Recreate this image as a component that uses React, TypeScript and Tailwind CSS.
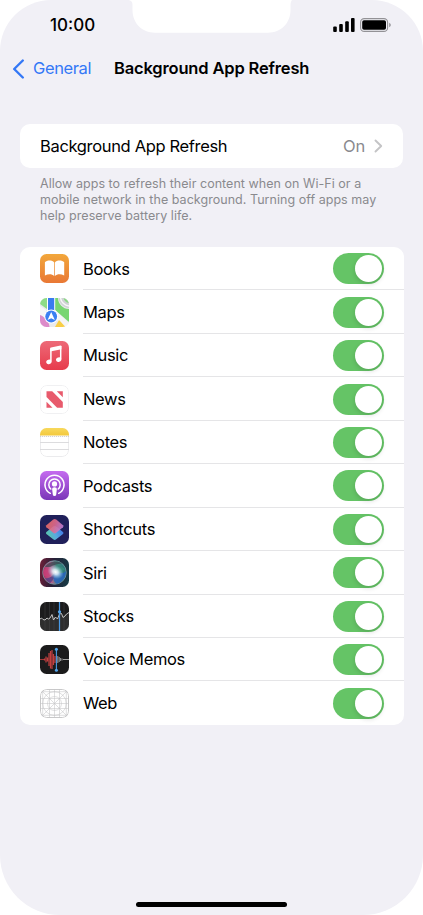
import type { ReactNode } from "react";

function Tile({ children, id }: { children: ReactNode; id: string }) {
    return (
        <svg viewBox="0 0 29 29" className="size-[29px] shrink-0">
            <defs>
                <clipPath id={id}>
                    <rect width="29" height="29" rx="6.5" />
                </clipPath>
            </defs>
            <g clipPath={`url(#${id})`}>{children}</g>
        </svg>
    );
}

function Gradient({ id, from, to }: { id: string; from: string; to: string }) {
    return (
        <linearGradient id={id} x1="0" y1="0" x2="0" y2="1">
            <stop stopColor={from} />
            <stop offset="1" stopColor={to} />
        </linearGradient>
    );
}

function BooksIcon() {
    return (
        <Tile id="books">
            <Gradient id="books-bg" from="#f2a73b" to="#e97835" />
            <rect width="29" height="29" fill="url(#books-bg)" />
            <path d="M14.200 8.600C13.100 7.200 11.500 6.600 9.600 6.600C7.700 6.600 6 7.200 4.900 8.300V21.600C6.400 20.700 8 20.300 9.600 20.300C11.400 20.300 13 20.800 14.200 21.900Z" fill="#fff" />
            <path d="M14.900 8.600C16 7.200 17.600 6.600 19.500 6.600C21.400 6.600 23.100 7.200 24.200 8.300V21.600C22.700 20.700 21.100 20.300 19.500 20.300C17.700 20.300 16.100 20.800 14.900 21.900Z" fill="#fff" />
        </Tile>
    );
}

function MapsIcon() {
    return (
        <Tile id="maps">
            <rect width="29" height="29" fill="#e9eaec" />
            <path d="M0 0H7V11L0 6Z" fill="#8ddc87" />
            <path d="M0 8L6 12V20L0 17Z" fill="#f6f6f7" />
            <path d="M0 17C5 19 9 23 9.500 29H0Z" fill="#dc8bc9" />
            <path d="M15 0H18C18 6 23 11 29 11V24L15 12Z" fill="#78d672" />
            <path d="M18.500 0C19 5 23 9.500 29 10V0Z" fill="#d0d2d5" />
            <path d="M20.500 0C21 4 24.500 7.500 29 8" fill="none" stroke="#f7f7f7" strokeWidth="1.500" />
            <path d="M23.500 0C24 2.500 26 4.700 29 5V0Z" fill="#8cd987" />
            <path d="M14 11L29 25V29H24L12 17Z" fill="#f5f5f6" />
            <path d="M19 22L25.500 29H15Z" fill="#f8ce45" />
            <rect x="7" width="1.200" height="16" fill="#fff" />
            <rect x="14" width="1.200" height="14" fill="#fff" />
            <rect x="8" width="6.200" height="16" fill="#397bf0" />
            <circle cx="11.200" cy="18.500" r="6.900" fill="#fff" />
            <circle cx="11.200" cy="18.500" r="5.900" fill="#3a7ff2" />
            <path d="M11.200 14L14.800 22L11.200 20.300L7.600 22Z" fill="#fff" />
        </Tile>
    );
}

function MusicIcon() {
    return (
        <Tile id="music">
            <Gradient id="music-bg" from="#ed6a78" to="#e73b4b" />
            <rect width="29" height="29" fill="url(#music-bg)" />
            <path d="M10.900 20.500V8.100L20.700 6V18.200" fill="none" stroke="#fff" strokeWidth="1.500" />
            <path d="M10.200 7.500Q10.200 6.800 11 6.600L20.600 4.600Q21.400 4.500 21.400 5.200V8.200L10.200 10.600Z" fill="#fff" />
            <ellipse cx="8.900" cy="20.900" rx="2.700" ry="2.200" transform="rotate(-18 8.900 20.900)" fill="#fff" />
            <ellipse cx="18.700" cy="18.700" rx="2.700" ry="2.200" transform="rotate(-18 18.700 18.700)" fill="#fff" />
        </Tile>
    );
}

function NewsIcon() {
    return (
        <Tile id="news">
            <rect x=".5" y=".5" width="28" height="28" rx="6.200" fill="#fff" stroke="#f0f0f2" />
            <path d="M6.500 6.300H12.200L22.800 16.900V22.700H17.100L6.500 12.100Z" fill="#e85a6c" />
            <path d="M16.800 6.300H22.800V12.300Z" fill="#e85a6c" />
            <path d="M6.500 16.700L12.500 22.700H6.500Z" fill="#e85a6c" />
        </Tile>
    );
}

function NotesIcon() {
    return (
        <Tile id="notes">
            <rect x=".5" y=".5" width="28" height="28" rx="6.200" fill="#fff" stroke="#ebebed" />
            <Gradient id="notes-bg" from="#f8d95c" to="#f3c83c" />
            <rect width="29" height="7.500" fill="url(#notes-bg)" />
            <path d="M0 8.500H29" stroke="#c8c8c8" strokeWidth=".8" strokeDasharray="1.200 .8" />
            <path d="M0 14.500H29M0 21.500H29" stroke="#dcdcde" strokeWidth="1" />
        </Tile>
    );
}

function PodcastsIcon() {
    return (
        <Tile id="podcasts">
            <Gradient id="podcasts-bg" from="#c56bef" to="#7a36b8" />
            <rect width="29" height="29" fill="url(#podcasts-bg)" />
            <g fill="none" stroke="#fff" strokeWidth="1.500" strokeLinecap="round">
                <path d="M10.300 22.300A9.500 9.500 0 1 1 18.700 22.300" />
                <path d="M10.800 18A5.700 5.700 0 1 1 18.200 18" />
            </g>
            <circle cx="14.500" cy="12.900" r="2.600" fill="#fff" />
            <path d="M12.100 18Q12.100 16.300 14.500 16.300T16.900 18L16.200 23.500Q16 25 14.500 25T12.800 23.500Z" fill="#fff" />
        </Tile>
    );
}

function ShortcutsIcon() {
    return (
        <Tile id="shortcuts">
            <defs>
                <linearGradient id="short-top" x1="0" y1=".3" x2="1" y2=".6">
                    <stop stopColor="#ed6a5e" />
                    <stop offset=".5" stopColor="#df6a8e" />
                    <stop offset="1" stopColor="#bd82dc" />
                </linearGradient>
                <linearGradient id="short-low" x1="0" y1=".6" x2="1" y2=".3">
                    <stop stopColor="#59c7a8" />
                    <stop offset=".5" stopColor="#58a9df" />
                    <stop offset="1" stopColor="#3f76e8" />
                </linearGradient>
            </defs>
            <rect width="29" height="29" fill="#20205a" />
            <path d="M13.200 11.500Q14.700 10.300 16.200 11.500L23 16.900Q24 17.900 23 18.900L16.200 24.300Q14.700 25.500 13.200 24.300L6.400 18.900Q5.400 17.900 6.400 16.900Z" fill="url(#short-low)" />
            <path d="M13.200 4.600Q14.700 3.400 16.200 4.600L23 10.200Q24 11.200 23 12.200L16.200 17.800Q14.700 19 13.200 17.800L6.400 12.200Q5.400 11.200 6.400 10.200Z" fill="url(#short-top)" fillOpacity=".9" />
        </Tile>
    );
}

function SiriIcon() {
    return (
        <Tile id="siri">
            <defs>
                <linearGradient id="siri-bg" x1="0" y1=".4" x2="1" y2=".5">
                    <stop stopColor="#6b1f38" />
                    <stop offset=".45" stopColor="#262038" />
                    <stop offset="1" stopColor="#173a45" />
                </linearGradient>
                <linearGradient id="siri-orb" x1="0" y1=".5" x2="1" y2=".45">
                    <stop stopColor="#b02f60" />
                    <stop offset=".35" stopColor="#b8608e" />
                    <stop offset=".6" stopColor="#408c80" />
                    <stop offset="1" stopColor="#2a7479" />
                </linearGradient>
                <radialGradient id="siri-glow">
                    <stop stopColor="#fff" />
                    <stop offset=".35" stopColor="#e4f4fb" stopOpacity=".85" />
                    <stop offset="1" stopColor="#9bd0e8" stopOpacity="0" />
                </radialGradient>
            </defs>
            <rect width="29" height="29" fill="url(#siri-bg)" />
            <circle cx="14.500" cy="14.500" r="11.800" fill="url(#siri-orb)" stroke="#769aa5" strokeWidth=".8" />
            <path d="M5 9C8 4 17 1.500 22 5.500C17 6 13 7 10.500 9Z" fill="#3a4650" opacity=".75" />
            <path d="M15 14C20 15 24 16 26 13C26 19 23 24 17 26C13 24 12 18 15 14Z" fill="#2b63c0" opacity=".8" />
            <path d="M5 20C9 21 12 19 15 14C14 21 12 24 10 25C8 24 6 22 5 20Z" fill="#4a3f86" opacity=".75" />
            <path d="M3.500 12C6 9 11 10 14.500 14C11 19 6 20 3.500 17Z" fill="#d0407c" opacity=".6" />
            <path d="M13 13C17 8 22 8 25 11C23 14 18 14 13 13Z" fill="#3f9a80" opacity=".5" />
            <ellipse cx="15.500" cy="14" rx="8.500" ry="6.500" transform="rotate(30 15.500 14)" fill="url(#siri-glow)" />
        </Tile>
    );
}

function StocksIcon() {
    return (
        <Tile id="stocks">
            <rect width="29" height="29" fill="#1b1b1c" />
            <path d="M5 0V29M9.500 0V29M14 0V29M24 0V29" stroke="#343436" strokeWidth=".8" />
            <path d="M0 17L1.500 16L3 17.500L5 18L7 16L8.500 17L10 16L12 12.500L13.500 18L15.500 15L17.500 17L19.500 12L21.500 11.500L23 15.500L25 14L26.500 12L29 10.500V29H0Z" fill="#4b4b4c" opacity=".4" />
            <path d="M0 17L1.500 16L3 17.500L5 18L7 16L8.500 17L10 16L12 12.500L13.500 18L15.500 15L17.500 17L19.500 12L21.500 11.500L23 15.500L25 14L26.500 12L29 10.500" fill="none" stroke="#d1d1d1" strokeWidth=".9" />
            <path d="M19.500 0V29" stroke="#4a9ae6" strokeWidth="1.200" />
            <circle cx="19.500" cy="9.800" r="1.600" fill="#55a7ed" />
        </Tile>
    );
}

function VoiceMemosIcon() {
    return (
        <Tile id="memos">
            <rect width="29" height="29" fill="#1b1b1c" />
            <path d="M0 14.500H5" stroke="#a03a3a" strokeWidth="1" />
            <path d="M4.500 13.500V15.500M6 11.500V17.500M7.500 12.500V16.500M9 8V21M10.500 6V23.500M12 5V24M13.500 9V20M15 11V18" stroke="#c44040" strokeWidth="1.200" />
            <path d="M17.800 11V18M19.200 12V17M20.600 13V16M22 13.500V15.500" stroke="#9a9a9b" strokeWidth="1" />
            <path d="M23 14.500H29" stroke="#b5b5b6" strokeWidth=".9" />
            <path d="M16.400 4V25.500" stroke="#4a9ae6" strokeWidth="1.100" />
            <circle cx="16.400" cy="4.200" r="1.500" fill="#55a7ed" />
            <circle cx="16.400" cy="25.300" r="1.500" fill="#55a7ed" />
        </Tile>
    );
}

function WebIcon() {
    return (
        <Tile id="web">
            <rect x=".5" y=".5" width="28" height="28" rx="6.200" fill="#fff" stroke="#c8c8c9" />
            <g fill="none" stroke="#c4c4c6" strokeWidth=".55">
                <path d="M2.700 0V29M9.500 0V29M14.500 0V29M19.500 0V29M26.300 0V29M0 2.700H29M0 9.500H29M0 14.500H29M0 19.500H29M0 26.300H29M0 0L29 29M29 0L0 29" />
                <circle cx="14.500" cy="14.500" r="11.800" />
                <circle cx="14.500" cy="14.500" r="7" />
            </g>
        </Tile>
    );
}

function Toggle() {
    return (
        <button role="switch" aria-checked="true" className="mt-px flex h-[31px] w-[51px] items-center justify-end rounded-full bg-[#65c466] pr-[2px]">
            <span className="size-[27px] rounded-full bg-white shadow-[0_2px_5px_rgba(0,0,0,0.15)]" />
        </button>
    );
}

const apps = [
    { name: "Books", icon: <BooksIcon /> },
    { name: "Maps", icon: <MapsIcon /> },
    { name: "Music", icon: <MusicIcon /> },
    { name: "News", icon: <NewsIcon /> },
    { name: "Notes", icon: <NotesIcon /> },
    { name: "Podcasts", icon: <PodcastsIcon /> },
    { name: "Shortcuts", icon: <ShortcutsIcon /> },
    { name: "Siri", icon: <SiriIcon /> },
    { name: "Stocks", icon: <StocksIcon /> },
    { name: "Voice Memos", icon: <VoiceMemosIcon /> },
    { name: "Web", icon: <WebIcon /> },
];

export default function App() {
    return (
        <div className="h-[915px] w-[423px] overflow-hidden bg-white font-['Inter',sans-serif] text-black">
            <div className="relative flex h-full flex-col rounded-t-[51px] rounded-b-[60px] bg-[#f1f0f6]">
                <svg viewBox="0 0 165 33" className="absolute top-0 left-[127px] h-[33px] w-[165px]">
                    <path d="M0 0C4 0 5.500 1.500 5.500 5V10C5.500 23 15 32.700 28 32.700H141C154 32.700 163.500 23 163.500 10V5C163.500 1.500 165 0 165 0Z" fill="#fff" />
                </svg>

                <div className="flex h-[50px] items-center justify-between pr-[32px] pl-[50px]">
                    <span className="pt-[2px] text-[17px] font-medium">10:00</span>
                    <div className="flex items-center gap-[5px]">
                        <svg viewBox="0 0 22 14" className="h-[14px] w-[22px]">
                            <rect x=".2" y="8.500" width="3.600" height="5.500" rx="1" />
                            <rect x="6.200" y="6" width="3.600" height="8" rx="1" />
                            <rect x="12.200" y="3.200" width="3.600" height="10.800" rx="1" />
                            <rect x="18" y="0" width="3.600" height="14" rx="1" />
                        </svg>
                        <svg viewBox="0 0 31 14" className="h-[14px] w-[31px]">
                            <rect x=".6" y=".6" width="27" height="12.800" rx="3.700" fill="none" stroke="#939296" strokeWidth="1.100" />
                            <rect x="2.200" y="2.200" width="23.800" height="9.600" rx="1.800" />
                            <path d="M29.200 4.700V9.300Q30.800 8.500 30.800 7T29.200 4.700Z" fill="#939296" />
                        </svg>
                    </div>
                </div>

                <div className="flex h-[37px] items-center pl-[12px]">
                    <svg viewBox="0 0 13 20" className="h-[20px] w-[13px]">
                        <path d="M10.800 1.500L2.200 10L10.800 18.500" fill="none" stroke="#3478f6" strokeWidth="2.400" strokeLinecap="round" strokeLinejoin="round" />
                    </svg>
                    <span className="ml-[8px] w-[81px] text-[16.5px] tracking-[-0.4px] text-[#3478f6]">General</span>
                    <h1 className="text-[16.5px] font-semibold tracking-[-0.16px] whitespace-nowrap">Background App Refresh</h1>
                </div>

                <div className="mx-[20px] mt-[37px] flex h-[44px] items-center justify-between rounded-[10px] bg-white pr-[20px] pl-[20px]">
                    <span className="pt-px text-[16.5px] tracking-[-0.34px]">Background App Refresh</span>
                    <div className="flex items-center gap-[9px] text-[#8a8a8e]">
                        <span className="text-[16.5px] tracking-[-0.2px]">On</span>
                        <svg viewBox="0 0 9 14" className="h-[14px] w-[9px]">
                            <path d="M1.500 1.500L7.200 7L1.500 12.500" fill="none" stroke="#c4c4c6" strokeWidth="1.900" strokeLinecap="round" strokeLinejoin="round" />
                        </svg>
                    </div>
                </div>
                <p className="mt-[8px] ml-[40px] text-[12.5px] leading-[16px] tracking-[0.04px] text-[#8a8a8e]">
                    Allow apps to refresh their content when on Wi-Fi or a<br />
                    mobile network in the background. Turning off apps may<br />
                    help preserve battery life.
                </p>

                <div className="mr-[19px] ml-[20px] mt-[23px] rounded-[10px] bg-white">
                    {apps.map((app, i) => (
                        <div key={app.name} className="flex h-[43.45px] items-center pl-[19.5px]">
                            {app.icon}
                            <div className={`ml-[14.5px] flex h-full flex-1 items-center justify-between pr-[20px] ${i < apps.length - 1 ? "border-b border-[#e5e5e7]" : ""}`}>
                                <span className="pt-[1.4px] text-[16.5px] tracking-[-0.34px]">{app.name}</span>
                                <Toggle />
                            </div>
                        </div>
                    ))}
                </div>

                <div className="mx-auto mt-auto mb-[8px] h-[5px] w-[151px] rounded-full bg-black" />
            </div>
        </div>
    );
}
